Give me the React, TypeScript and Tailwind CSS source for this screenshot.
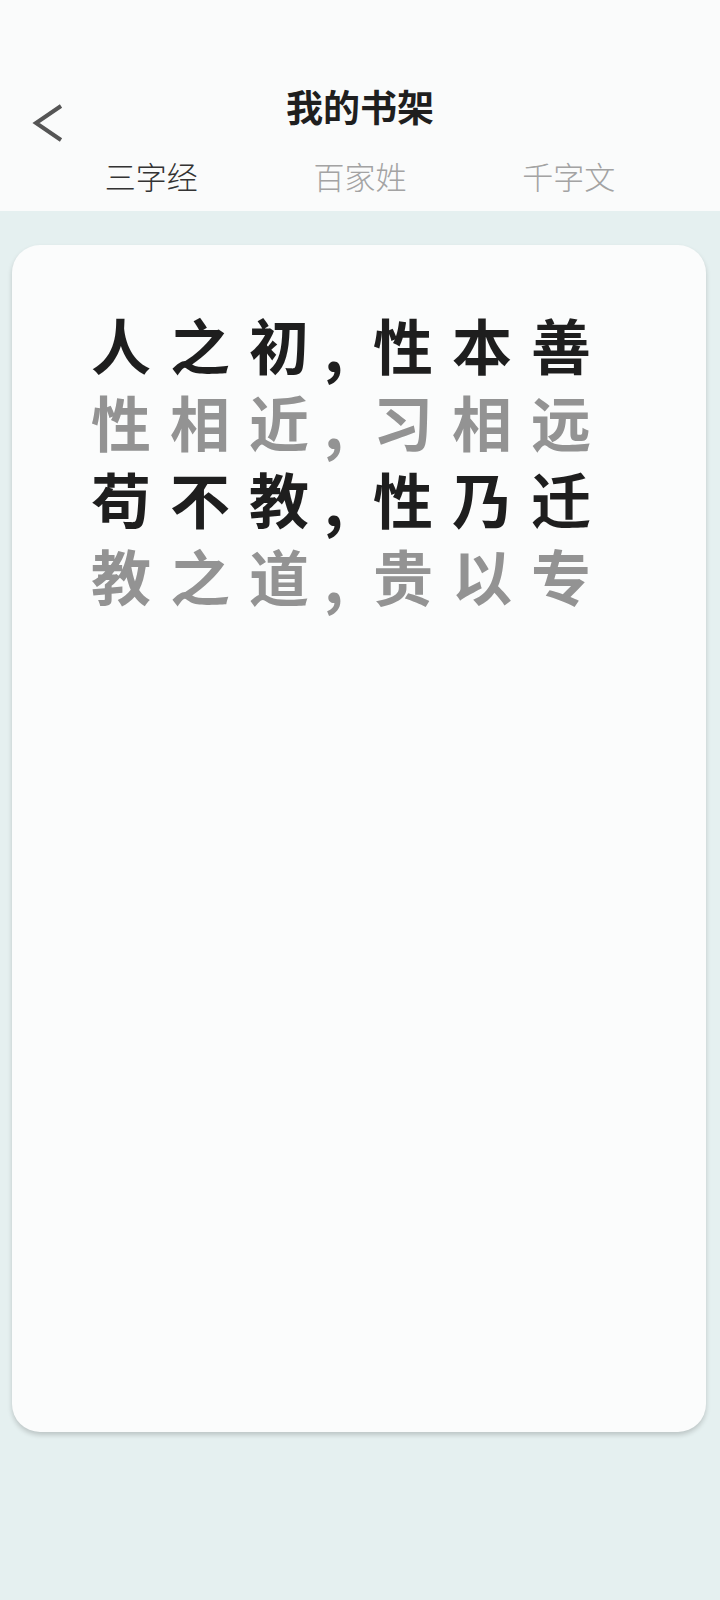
import React from "react";

const lines = [
  { chars: ["人", "之", "初", "性", "本", "善"], dark: true },
  { chars: ["性", "相", "近", "习", "相", "远"], dark: false },
  { chars: ["苟", "不", "教", "性", "乃", "迁"], dark: true },
  { chars: ["教", "之", "道", "贵", "以", "专"], dark: false },
];

const tabs = ["三字经", "百家姓", "千字文"];

const cjk = { fontFamily: '"Noto Sans CJK SC", "Noto Sans", sans-serif' };

function PoemLine({ chars, dark }: { chars: string[]; dark: boolean }) {
  const color = dark ? "text-[#1e1e1e]" : "text-[#939393]";
  return (
    <div className={`flex h-[77px] items-center gap-[19px] text-[60px] font-bold leading-[77px] ${color}`}>
      {chars.slice(0, 3).map((c, i) => (
        <span key={`a${i}`} className="w-[60px] text-center">
          {c}
        </span>
      ))}
      <span className="w-[26px] -translate-x-[4px] translate-y-[2px] text-left">,</span>
      {chars.slice(3).map((c, i) => (
        <span key={`b${i}`} className="w-[60px] text-center">
          {c}
        </span>
      ))}
    </div>
  );
}

export default function App() {
  const active = 0;
  return (
    <div className="flex min-h-[1600px] w-[720px] flex-col bg-[#e5f0f0]" style={cjk}>
      {/* header */}
      <div className="h-[211px] bg-[#fafbfb] pt-[86px]">
        <div className="relative flex h-[40px] items-center justify-center">
          <button type="button" className="absolute left-[32px] top-[18px]" aria-label="back">
            <svg width="32" height="38" viewBox="0 0 32 38" fill="none">
              <polyline
                points="29,2 4,19 29,36"
                stroke="#555"
                strokeWidth="4"
                strokeLinejoin="miter"
              />
            </svg>
          </button>
          <h1 className="text-[37px] font-bold leading-none text-[#1f1f1f]">我的书架</h1>
        </div>
        <div className="mt-[30px] flex px-[47px]">
          {tabs.map((t, i) => (
            <div
              key={t}
              className={`flex-1 text-center text-[31px] font-light leading-[40px] ${
                i === active ? "text-[#333]" : "text-[#a3a3a3]"
              }`}
            >
              {t}
            </div>
          ))}
        </div>
      </div>

      {/* card */}
      <div className="ml-3 mt-[34px] h-[1187px] w-[694px] rounded-[28px] bg-[#fbfcfc] pl-[79px] pt-[60px] shadow-[0_3px_5px_rgba(0,0,0,0.18)]">
        {lines.map((l, i) => (
          <PoemLine key={i} chars={l.chars} dark={l.dark} />
        ))}
      </div>
    </div>
  );
}
